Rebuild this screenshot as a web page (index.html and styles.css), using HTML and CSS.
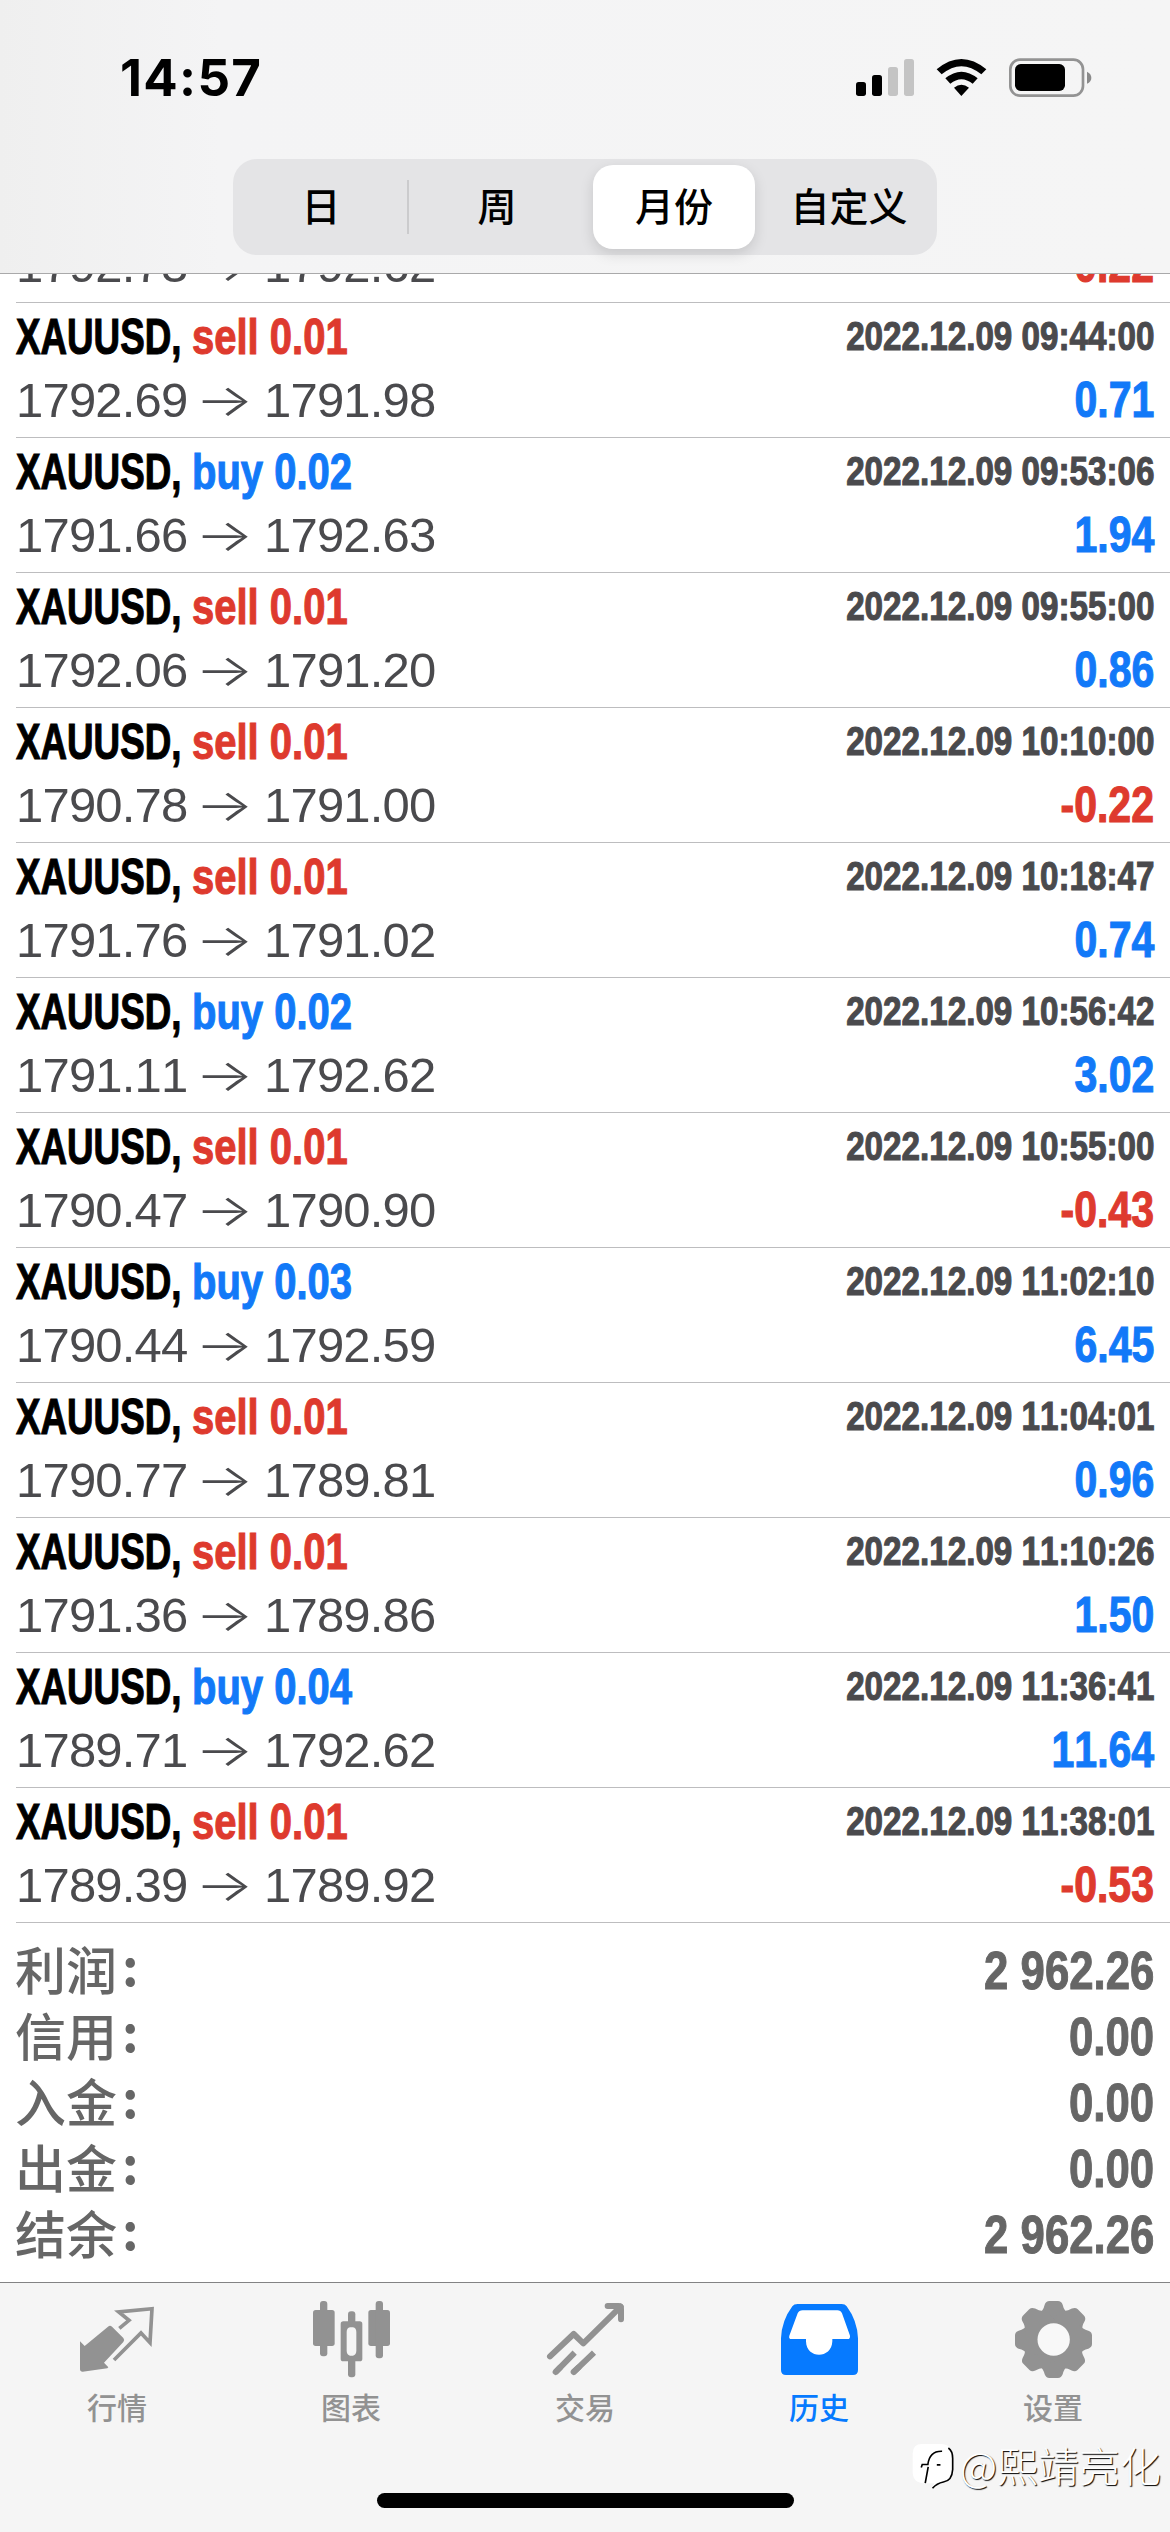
FILE: index.html
```html
<!DOCTYPE html>
<html lang="zh-CN">
<head>
<meta charset="utf-8">
<title>历史</title>
<link rel="stylesheet" href="styles.css">
</head>
<body>
<div class="app">
  <header class="header">
    <div class="status">
      <span class="clock">14:57</span>
      <svg class="status-icons" viewBox="0 0 750 120">
        <g fill="#000"><rect x="0" y="72" width="30" height="42" rx="8"/><rect x="48" y="51" width="30" height="63" rx="8"/></g>
        <g fill="#c4c4c4"><rect x="96" y="27" width="30" height="87" rx="8"/><rect x="144" y="3" width="30" height="111" rx="8"/></g>
        <path d="M242 34Q316 -28 391 34L376 49Q316 0 257 49ZM268 61Q316 21 365 61L350 77Q316 50 283 77ZM294 89Q316 71 339 89L316 114Z" fill="#000"/>
        <rect x="463" y="5" width="218" height="108" rx="29" fill="none" stroke="#939393" stroke-width="8"/>
        <rect x="477" y="18" width="150" height="81" rx="17" fill="#000"/>
        <path d="M693 41Q706 47 706 59T693 77Z" fill="#8a8a8a"/>
      </svg>
    </div>
    <nav class="segments">
      <span class="segment divided">日</span>
      <span class="segment">周</span>
      <span class="segment selected">月份</span>
      <span class="segment">自定义</span>
    </nav>
  </header>

  <main class="content">
    <div class="deals">
      <div class="deal scrolled"><div class="line"><span class="price">1792.73</span><span class="arrow">→</span><span class="price">1792.62</span><span class="loss">-0.22</span></div></div>
      <div class="deal"><div class="line"><span class="symbol">XAUUSD,</span><span class="sell">sell 0.01</span><span class="time">2022.12.09 09:44:00</span></div><div class="line"><span class="price">1792.69</span><span class="arrow">→</span><span class="price">1791.98</span><span class="gain">0.71</span></div></div>
      <div class="deal"><div class="line"><span class="symbol">XAUUSD,</span><span class="buy">buy 0.02</span><span class="time">2022.12.09 09:53:06</span></div><div class="line"><span class="price">1791.66</span><span class="arrow">→</span><span class="price">1792.63</span><span class="gain">1.94</span></div></div>
      <div class="deal"><div class="line"><span class="symbol">XAUUSD,</span><span class="sell">sell 0.01</span><span class="time">2022.12.09 09:55:00</span></div><div class="line"><span class="price">1792.06</span><span class="arrow">→</span><span class="price">1791.20</span><span class="gain">0.86</span></div></div>
      <div class="deal"><div class="line"><span class="symbol">XAUUSD,</span><span class="sell">sell 0.01</span><span class="time">2022.12.09 10:10:00</span></div><div class="line"><span class="price">1790.78</span><span class="arrow">→</span><span class="price">1791.00</span><span class="loss">-0.22</span></div></div>
      <div class="deal"><div class="line"><span class="symbol">XAUUSD,</span><span class="sell">sell 0.01</span><span class="time">2022.12.09 10:18:47</span></div><div class="line"><span class="price">1791.76</span><span class="arrow">→</span><span class="price">1791.02</span><span class="gain">0.74</span></div></div>
      <div class="deal"><div class="line"><span class="symbol">XAUUSD,</span><span class="buy">buy 0.02</span><span class="time">2022.12.09 10:56:42</span></div><div class="line"><span class="price">1791.11</span><span class="arrow">→</span><span class="price">1792.62</span><span class="gain">3.02</span></div></div>
      <div class="deal"><div class="line"><span class="symbol">XAUUSD,</span><span class="sell">sell 0.01</span><span class="time">2022.12.09 10:55:00</span></div><div class="line"><span class="price">1790.47</span><span class="arrow">→</span><span class="price">1790.90</span><span class="loss">-0.43</span></div></div>
      <div class="deal"><div class="line"><span class="symbol">XAUUSD,</span><span class="buy">buy 0.03</span><span class="time">2022.12.09 11:02:10</span></div><div class="line"><span class="price">1790.44</span><span class="arrow">→</span><span class="price">1792.59</span><span class="gain">6.45</span></div></div>
      <div class="deal"><div class="line"><span class="symbol">XAUUSD,</span><span class="sell">sell 0.01</span><span class="time">2022.12.09 11:04:01</span></div><div class="line"><span class="price">1790.77</span><span class="arrow">→</span><span class="price">1789.81</span><span class="gain">0.96</span></div></div>
      <div class="deal"><div class="line"><span class="symbol">XAUUSD,</span><span class="sell">sell 0.01</span><span class="time">2022.12.09 11:10:26</span></div><div class="line"><span class="price">1791.36</span><span class="arrow">→</span><span class="price">1789.86</span><span class="gain">1.50</span></div></div>
      <div class="deal"><div class="line"><span class="symbol">XAUUSD,</span><span class="buy">buy 0.04</span><span class="time">2022.12.09 11:36:41</span></div><div class="line"><span class="price">1789.71</span><span class="arrow">→</span><span class="price">1792.62</span><span class="gain">11.64</span></div></div>
      <div class="deal"><div class="line"><span class="symbol">XAUUSD,</span><span class="sell">sell 0.01</span><span class="time">2022.12.09 11:38:01</span></div><div class="line"><span class="price">1789.39</span><span class="arrow">→</span><span class="price">1789.92</span><span class="loss">-0.53</span></div></div>
    </div>
    <div class="summary">
      <div class="total"><span>利润<i>:</i></span><span class="amount">2 962.26</span></div>
      <div class="total"><span>信用<i>:</i></span><span class="amount">0.00</span></div>
      <div class="total"><span>入金<i>:</i></span><span class="amount">0.00</span></div>
      <div class="total"><span>出金<i>:</i></span><span class="amount">0.00</span></div>
      <div class="total"><span>结余<i>:</i></span><span class="amount">2 962.26</span></div>
    </div>
  </main>

  <footer class="tabbar">
    <div class="tabs">
      <div class="tab">
        <svg viewBox="51 15 240 240">
          <path d="M60 154L74 168L144 110Q150 105 156 110L190 144Q195 150 190 156L132 218L145 232L142 235L68 245Q60 245 60 238Z" fill="currentColor" stroke="none"/>
          <path d="M178 115L207 91L176 66L276 56L270 158L243 129L162 210" fill="none" stroke="currentColor" stroke-width="11"/>
        </svg>
        <span>行情</span>
      </div>
      <div class="tab">
        <svg viewBox="753 15 240 240" fill="currentColor">
          <rect x="759" y="60" width="65" height="108" rx="8"/><rect x="780" y="33" width="22" height="166" rx="9"/>
          <rect x="925" y="60" width="65" height="108" rx="8"/><rect x="947" y="33" width="22" height="172" rx="9"/>
          <rect x="864" y="64" width="22" height="40" rx="9"/><rect x="864" y="200" width="22" height="62" rx="9"/>
          <path fill-rule="evenodd" d="M850 94H899Q907 94 907 102V206Q907 214 899 214H850Q842 214 842 206V102Q842 94 850 94ZM870 112Q860 114 860 126V182Q860 194 870 197H879Q889 194 889 182V126Q889 114 879 112Z"/>
        </svg>
        <span>图表</span>
      </div>
      <div class="tab">
        <svg viewBox="45 15 240 240" fill="none" stroke="currentColor" stroke-width="18" stroke-linejoin="round">
          <path d="M60 199L131 132L160 160L272 50" stroke-linecap="round"/>
          <path d="M76 247L134 188M130 247L192 188"/><path d="M77 246L90 233M131 246L145 233" stroke-linecap="round"/>
          <path d="M233 48H265Q273 48 273 56V88" stroke-linecap="round"/>
        </svg>
        <span>交易</span>
      </div>
      <div class="tab active">
        <svg viewBox="747 15 240 240">
          <path fill="currentColor" d="M803 42H935Q945 42 950 49Q982 92 984 145V240Q984 255 969 255H768Q753 255 753 240V145Q755 92 787 49Q792 42 803 42Z"/>
          <path fill="#fff" d="M818 61H922Q932 61 936 70L960 137Q961 147 953 147H907V154C905 208 829 208 828 154V147H785Q775 147 778 137L803 70Q807 61 818 61Z"/>
        </svg>
        <span>历史</span>
      </div>
      <div class="tab">
        <svg viewBox="369 15 240 240">
          <g fill="currentColor">
            <circle cx="490.500" cy="148.500" r="91"/>
            <path id="tooth" d="M447 70Q460 62 464 44Q468 33 478 33H504Q514 33 518 44Q522 62 535 70L534 227Q522 235 518 253Q514 264 504 264H478Q468 264 464 253Q460 235 447 227Z"/>
            <use href="#tooth" transform="rotate(45 490.500 148.500)"/>
            <use href="#tooth" transform="rotate(90 490.500 148.500)"/>
            <use href="#tooth" transform="rotate(135 490.500 148.500)"/>
          </g>
          <circle cx="491" cy="148.500" r="48.500" fill="#f8f8f8"/>
        </svg>
        <span>设置</span>
      </div>
    </div>
    <div class="home-indicator"></div>
  </footer>

  <div class="watermark">
    <svg viewBox="55 465 130 145">
      <path fill="#fff" d="M85 471H145Q180 475 180 512V550Q178 582 150 587Q132 590 128 600L118 606L122 590H95Q57 590 57 555V500Q57 471 85 471Z"/>
      <path fill="none" stroke="#000" stroke-width="5" d="M165 483Q178 492 178 515V548Q176 582 150 586Q130 590 117 605M95 589L104 540M83 542L86 533H103C106 508 118 492 146 493M130 534H141"/>
    </svg>
    <span>@熙靖亮化</span>
  </div>
</div>
</body>
</html>
```
FILE: styles.css
```css
* { box-sizing: border-box; }
body { margin: 0; background: #fff; }

.app {
  position: relative;
  display: flex;
  flex-direction: column;
  width: 1170px;
  height: 2532px;
  overflow: hidden;
  font-family: "Liberation Sans", "Noto Sans CJK SC", sans-serif;
  font-kerning: none;
}

/* header */
.header {
  height: 274px;
  padding: 57px 0 0;
  background: linear-gradient(90deg, #efefef 0, #f4f4f5 220px, #f5f5f5 100%);
  border-bottom: 1px solid #a9a9aa;
}
.status {
  display: flex;
  justify-content: space-between;
  height: 102px;
  padding: 0 64px 0 120px;
}
.clock {
  font: 700 51px/42px Inter, sans-serif;
  letter-spacing: 1.3px;
}
.status-icons { width: 250px; height: 40px; margin-top: 1px; }
.segments {
  display: grid;
  grid-template-columns: repeat(4, 1fr);
  width: 704px;
  height: 96px;
  margin: 0 auto;
  border-radius: 24px;
  background: #e4e4e6;
}
.segment {
  display: flex;
  align-items: center;
  justify-content: center;
  padding-bottom: 5px;
  font: 500 39px/1 "Noto Sans CJK SC", sans-serif;
}
.divided {
  background: linear-gradient(#cbcbcd, #cbcbcd) right 21px / 2px 54px no-repeat;
}
.selected {
  margin: 6px 6px 6px 8px;
  border-radius: 20px;
  background: #fff;
  box-shadow: 0 5px 14px rgba(0, 0, 0, 0.13);
}

/* deal history */
.content { flex: 1; overflow: hidden; }
.deals { margin-top: -41px; padding-left: 16px; }
.deal {
  height: 135px;
  padding: 3px 16px 0 0;
  border-bottom: 1px solid #bdbdbf;
}
.scrolled { height: 70px; padding-top: 0; }
.line {
  display: flex;
  height: 62px;
  line-height: 62px;
  font-size: 50px;
  white-space: nowrap;
}
.symbol, .buy, .sell, .time, .gain, .loss {
  font-weight: 700;
  -webkit-text-stroke: 1.1px currentColor;
}
.symbol {
  width: 176px;
  transform: scaleX(0.735);
  transform-origin: left;
}
.buy, .sell { transform: scaleX(0.8); transform-origin: left; }
.buy, .gain { color: #1279f8; }
.sell, .loss { color: #de3a2e; }
.time {
  margin-left: auto;
  font-size: 40px;
  line-height: 61px;
  color: #4a4a4d;
  transform: scaleX(0.83);
  transform-origin: right;
}
.gain, .loss {
  margin-left: auto;
  line-height: 64px;
  transform: scaleX(0.82);
  transform-origin: right;
}
.price {
  width: 173px;
  font-size: 49px;
  line-height: 64px;
  letter-spacing: -0.8px;
  color: #4a4a4d;
}
.arrow {
  width: 75px;
  text-align: center;
  font: 300 44px/64px Inter, sans-serif;
  color: #4a4a4d;
  transform: translateX(-2px) scaleX(1.4);
}

/* totals */
.summary { padding: 15px 16px 0 15px; }
.total {
  display: flex;
  justify-content: space-between;
  height: 66px;
  font: 500 51px/60px "Noto Sans CJK SC", sans-serif;
  color: #666;
}
.total i {
  margin-left: 5px;
  font-style: normal;
  font-weight: 700;
  line-height: 1;
  vertical-align: 4px;
}
.amount {
  font: 700 53px/66px "Liberation Sans", sans-serif;
  -webkit-text-stroke: 1px currentColor;
  transform: scaleX(0.825);
  transform-origin: right;
}

/* tab bar */
.tabbar {
  height: 250px;
  padding-top: 12px;
  border-top: 1px solid #838384;
  background: #f5f5f5;
}
.tabs { display: grid; grid-template-columns: repeat(5, 1fr); }
.tab {
  display: flex;
  flex-direction: column;
  align-items: center;
  color: #929292;
  font: 500 30px/44px "Noto Sans CJK SC", sans-serif;
}
.tab svg { width: 80px; height: 80px; margin-bottom: 9px; overflow: visible; }
.active { color: #067aff; }
.home-indicator {
  width: 417px;
  height: 15px;
  margin: 65px auto 0;
  border-radius: 8px;
  background: #000;
}

/* overlaid author mark */
.watermark {
  position: absolute;
  right: 9px;
  bottom: 40px;
  display: flex;
  align-items: center;
  gap: 5px;
  color: #fff;
  font: 300 41px/56px "Noto Sans CJK SC", sans-serif;
  text-shadow: 1px 1px 1px #000;
}
.watermark svg { width: 43px; height: 48px; margin-top: 4px; }
```
